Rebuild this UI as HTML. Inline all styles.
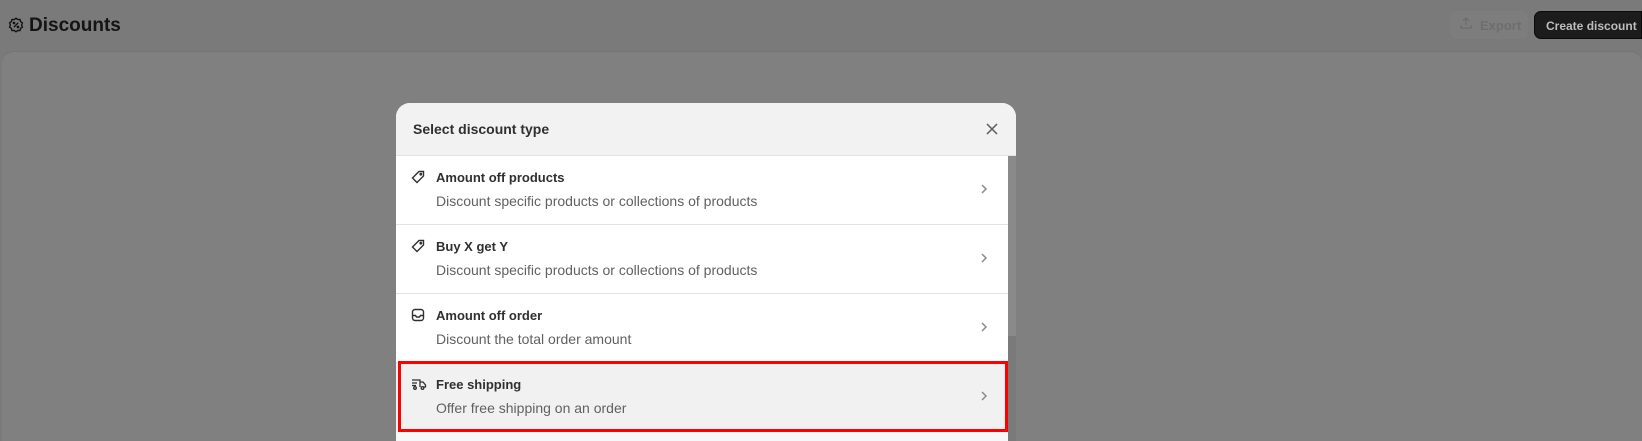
<!DOCTYPE html>
<html><head><style>
*{box-sizing:border-box;margin:0;padding:0}
html,body{width:1642px;height:441px;overflow:hidden}
body{background:#7a7a7a;font-family:"Liberation Sans",Arial,sans-serif;position:relative}
.card{position:absolute;left:2px;top:51px;width:1640px;height:390px;background:#808080;border-radius:12px 12px 0 0;border-top:1px solid #747474}
.h1{position:absolute;left:29px;top:15px;font-size:19px;font-weight:bold;color:#141414}
.exp{position:absolute;left:1450px;top:11px;width:78px;height:28px;border-radius:7px;background:#7d7d7d;color:#6e6e6e;font-size:13px;font-weight:bold;padding:7px 0 0 30px}
.cd{position:absolute;left:1534px;top:11px;width:108px;height:28px;border-radius:7px 0 0 7px;background:#1c1c1c;border:1px solid #0a0a0a;color:#bdbdbd;font-size:12px;font-weight:bold;padding:7px 0 0 11px;white-space:nowrap;overflow:hidden}
.modal{position:absolute;left:396px;top:103px;width:620px;height:338px;background:#fff;border-radius:14px 14px 0 0;overflow:hidden}
.hd{height:53px;background:#f2f2f2;border-bottom:1px solid #e3e3e3;font-size:14px;font-weight:bold;color:#303030;padding:18px 0 0 17px;position:relative}
.x{position:absolute;right:17px;top:19px}
.row{position:absolute;left:0;width:612px;height:69px;border-bottom:1px solid #e3e3e3}
.t{position:absolute;left:40px;top:14px;font-size:13px;font-weight:bold;color:#303030}
.d{position:absolute;left:40px;top:37px;font-size:14px;color:#616161}
.ic{position:absolute;left:15px;top:14px}
.ch{position:absolute;left:584px;top:27px}
.sb{position:absolute;left:612px;top:53px;width:8px;height:180px;background:#8a8a8a}
.sbg{position:absolute;left:612px;top:233px;width:8px;height:110px;background:#7a7a7a}
.red{position:absolute;left:398px;top:361px;width:610px;height:71px;border:3px solid #f00}
</style></head><body>
<div class="card"></div>
<svg style="position:absolute;left:8px;top:17px" width="16" height="16" viewBox="0 0 16 16" fill="none" stroke="#141414" stroke-width="1.4"><path d="M8 1.2l1.8 1.4 2.2-.1.6 2.1 1.8 1.3-.8 2.1.8 2.1-1.8 1.3-.6 2.1-2.2-.1L8 14.8l-1.8-1.4-2.2.1-.6-2.1-1.8-1.3.8-2.1-.8-2.1 1.8-1.3.6-2.1 2.2.1z"/><path d="M5.8 10.2l4.4-4.4"/><circle cx="6" cy="6" r=".7" fill="#141414"/><circle cx="10" cy="10" r=".7" fill="#141414"/></svg>
<div class="h1">Discounts</div>
<div class="exp">Export</div>
<svg style="position:absolute;left:1459px;top:16px" width="14" height="14" viewBox="0 0 14 14" fill="none" stroke="#6e6e6e" stroke-width="1.5"><path d="M7 9V2M4 5l3-3 3 3M2 9v3h10V9"/></svg>
<div class="cd">Create discount</div>
<div class="modal">
<div class="hd">Select discount type<svg class="x" width="14" height="14" viewBox="0 0 14 14" stroke="#5c5c5c" stroke-width="1.5"><path d="M2 2l10 10M12 2L2 12"/></svg></div>
<div class="row" style="top:53px">
<svg class="ic" width="14" height="14" viewBox="0 0 14 14" fill="none" stroke="#303030" stroke-width="1.4"><path d="M8 1.5h4.5V6L6 12.5 1.5 8z"/><circle cx="9.8" cy="4.2" r=".7"/></svg>
<div class="t">Amount off products</div><div class="d">Discount specific products or collections of products</div>
<svg class="ch" width="8" height="12" viewBox="0 0 8 12" fill="none" stroke="#8a8a8a" stroke-width="1.5"><path d="M2 2l4 4-4 4"/></svg></div>
<div class="row" style="top:122px">
<svg class="ic" width="14" height="14" viewBox="0 0 14 14" fill="none" stroke="#303030" stroke-width="1.4"><path d="M8 1.5h4.5V6L6 12.5 1.5 8z"/><circle cx="9.8" cy="4.2" r=".7"/></svg>
<div class="t">Buy X get Y</div><div class="d">Discount specific products or collections of products</div>
<svg class="ch" width="8" height="12" viewBox="0 0 8 12" fill="none" stroke="#8a8a8a" stroke-width="1.5"><path d="M2 2l4 4-4 4"/></svg></div>
<div class="row" style="top:191px">
<svg class="ic" width="14" height="14" viewBox="0 0 14 14" fill="none" stroke="#303030" stroke-width="1.4"><rect x="1.5" y="1.5" width="11" height="11" rx="2.5"/><path d="M1.5 7.5h3l1 1.5h3l1-1.5h3"/></svg>
<div class="t">Amount off order</div><div class="d">Discount the total order amount</div>
<svg class="ch" width="8" height="12" viewBox="0 0 8 12" fill="none" stroke="#8a8a8a" stroke-width="1.5"><path d="M2 2l4 4-4 4"/></svg></div>
<div class="row" style="top:260px;background:#f1f1f1;border:none">
<svg class="ic" width="16" height="14" viewBox="0 0 16 14" fill="none" stroke="#303030" stroke-width="1.3"><path d="M1 3h8v7M9 5h3l2.5 3v2H13M1 6h5M1 8.5h4"/><circle cx="4" cy="11" r="1.3"/><circle cx="11.5" cy="11" r="1.3"/></svg>
<div class="t">Free shipping</div><div class="d">Offer free shipping on an order</div>
<svg class="ch" width="8" height="12" viewBox="0 0 8 12" fill="none" stroke="#8a8a8a" stroke-width="1.5"><path d="M2 2l4 4-4 4"/></svg></div>
<div class="row" style="top:329px;height:9px;background:#f7f7f7;border:none"></div>
<div class="sb"></div><div class="sbg"></div>
</div>
<div class="red"></div>
</body></html>
